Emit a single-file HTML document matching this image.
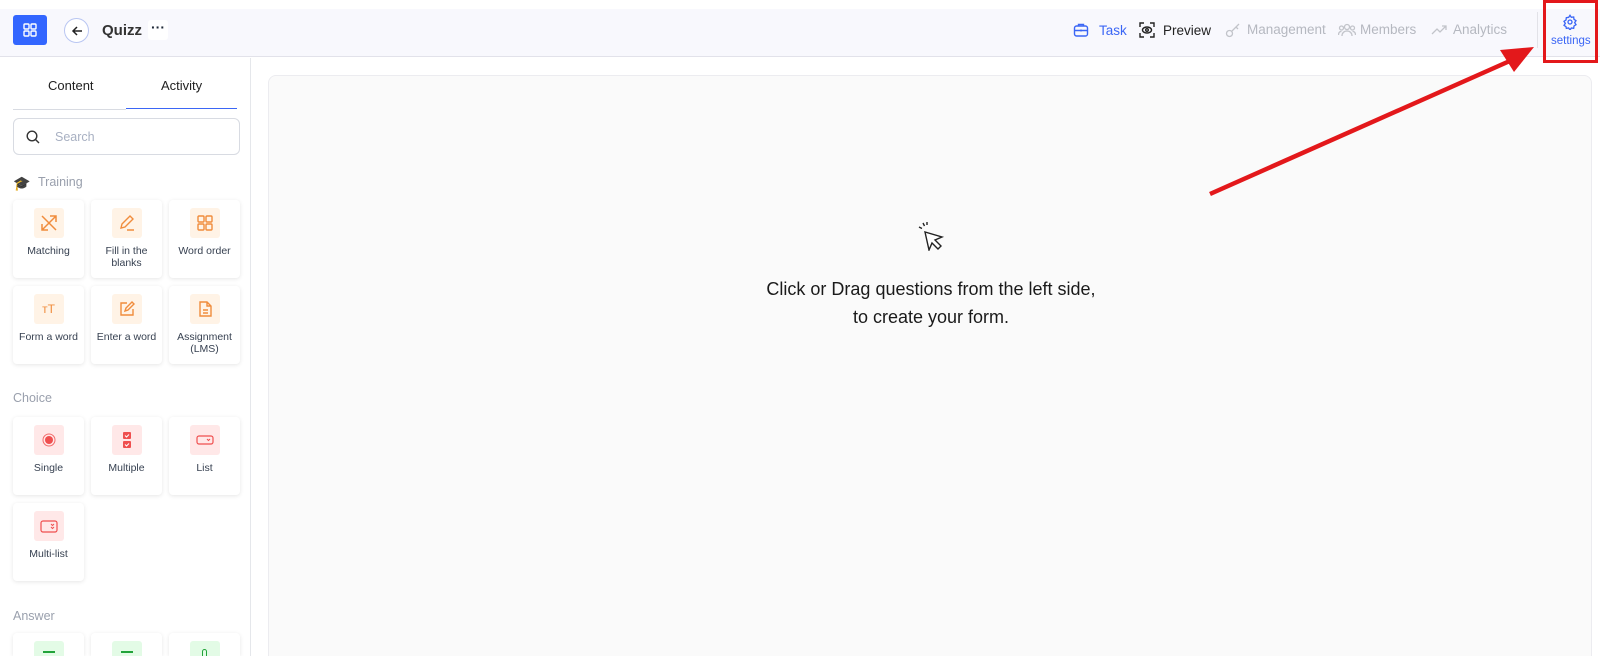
<!DOCTYPE html>
<html><head><meta charset="utf-8"><style>
*{box-sizing:border-box;margin:0;padding:0}
html,body{width:1600px;height:656px;overflow:hidden}
body{background:#fff;font-family:"Liberation Sans",sans-serif;color:#1f2937}
#w{position:relative;width:1600px;height:656px;overflow:hidden}
.a{position:absolute}
.hdr{left:0;top:9px;width:1600px;height:48px;background:#f8f8fd;border-bottom:1px solid #e2e2ea}
.nav{top:22px;font-size:13.5px;color:#b5b8c0;display:flex;align-items:center;gap:6px}
.card{position:absolute;width:71px;height:78px;background:#fff;border-radius:4px;box-shadow:0 1px 4px rgba(0,0,0,.1);text-align:center;font-size:10.5px;color:#374151;overflow:hidden}
.ic{width:30px;height:30px;border-radius:3px;margin:8px auto 7px;display:flex;align-items:center;justify-content:center}
.o{background:#fff3e6}.r{background:#ffe8e8}.g{background:#e3fbe6}
.lbl{font-size:12.5px;color:#9aa0ad}
</style></head><body><div id="w">
<div class="a hdr"></div>
<div class="a" style="left:13px;top:15px;width:34px;height:30px;background:#3366ff;border-radius:3px;display:flex;align-items:center;justify-content:center">
<svg width="14" height="14" viewBox="0 0 14 14" fill="none" stroke="#fff" stroke-width="1.4"><rect x="1" y="1" width="5" height="5" rx="1"/><rect x="8" y="1" width="5" height="5" rx="1"/><rect x="1" y="8" width="5" height="5" rx="1"/><rect x="8" y="8" width="5" height="5" rx="1"/></svg></div>
<div class="a" style="left:64px;top:18px;width:25px;height:25px;border-radius:50%;border:1px solid #b9c6f2;background:#fff;display:flex;align-items:center;justify-content:center">
<svg width="12" height="12" viewBox="0 0 12 12" fill="none" stroke="#222" stroke-width="1.5"><path d="M11 6H2M6 2L2 6l4 4"/></svg></div>
<div class="a" style="left:102px;top:22px;font-size:15px;font-weight:bold;color:#333">Quizz</div>
<div class="a" style="left:148px;top:20px;width:20px;height:20px;background:#fff;border-radius:3px;font-size:14px;text-align:center;line-height:14px;font-weight:bold">···</div>

<div class="a nav" style="left:1073px;color:#3b66f5"><svg width="16" height="16" viewBox="0 0 16 16" fill="none" stroke="#3b66f5" stroke-width="1.4"><rect x="1.5" y="4" width="13" height="10" rx="2"/><path d="M5.5 4V2.5h5V4M1.5 8.5h13M8 7.5v2"/></svg><span style="margin-left:4px">Task</span></div>
<div class="a nav" style="left:1139px;color:#222"><svg width="16" height="16" viewBox="0 0 16 16" fill="none" stroke="#222" stroke-width="1.4"><path d="M1 5V1h4M11 1h4v4M15 11v4h-4M5 15H1v-4"/><ellipse cx="8" cy="8" rx="4.5" ry="3"/><circle cx="8" cy="8" r="1.3"/></svg><span style="margin-left:2px">Preview</span></div>
<div class="a nav" style="left:1225px"><svg width="16" height="16" viewBox="0 0 16 16" fill="none" stroke="#c2c4ca" stroke-width="1.3"><circle cx="4.5" cy="11.5" r="3"/><path d="M7 9l7-7M11 5l2 2"/></svg></div>
<div class="a nav" style="left:1247px">Management</div>
<div class="a nav" style="left:1338px"><svg width="18" height="16" viewBox="0 0 18 16" fill="none" stroke="#c2c4ca" stroke-width="1.3"><circle cx="9" cy="5" r="2.5"/><circle cx="3.5" cy="6" r="2"/><circle cx="14.5" cy="6" r="2"/><path d="M4 14c0-3 2-5 5-5s5 2 5 5M0.5 13c0-2 1-3.5 3-3.5M17.5 13c0-2-1-3.5-3-3.5"/></svg></div>
<div class="a nav" style="left:1360px">Members</div>
<div class="a nav" style="left:1431px"><svg width="16" height="16" viewBox="0 0 16 16" fill="none" stroke="#c2c4ca" stroke-width="1.3"><path d="M1 12l5-5 3 3 6-6M11 4h4v4"/></svg></div>
<div class="a nav" style="left:1453px">Analytics</div>
<div class="a" style="left:1537px;top:12px;width:1px;height:36px;background:#e2e2e8"></div>
<div class="a" style="left:1562px;top:14px"><svg width="16" height="16" viewBox="0 0 24 24" fill="none" stroke="#3b66f5" stroke-width="2"><circle cx="12" cy="12" r="3"/><path d="M12 2l2 3 3.5-.5.5 3.5 3 2-2 3 2 3-3 2-.5 3.5-3.5-.5-2 3-2-3-3.5.5L6 19l-3-2 2-3-2-3 3-2 .5-3.5L10 5z"/></svg></div>
<div class="a" style="left:1551px;top:35px;font-size:11.5px;color:#3b66f5">settings</div>
<div class="a" style="left:1543px;top:0;width:55px;height:63px;border:3px solid #e3181b"></div>

<div class="a" style="left:250px;top:58px;width:1px;height:598px;background:#e5e7eb"></div>
<div class="a" style="left:48px;top:78px;font-size:13px;color:#222">Content</div>
<div class="a" style="left:161px;top:78px;font-size:13px;color:#222">Activity</div>
<div class="a" style="left:13px;top:109px;width:113px;height:1px;background:#d8dbe2"></div>
<div class="a" style="left:126px;top:108px;width:111px;height:1px;background:#3b66f5"></div>
<div class="a" style="left:13px;top:118px;width:227px;height:37px;border:1px solid #d8dbe2;border-radius:6px"></div>
<div class="a" style="left:26px;top:130px"><svg width="14" height="14" viewBox="0 0 14 14" fill="none" stroke="#333" stroke-width="1.4"><circle cx="6" cy="6" r="4.8"/><path d="M9.5 9.5L13 13"/></svg></div>
<div class="a" style="left:55px;top:130px;font-size:12.5px;color:#a8b0c2">Search</div>
<div class="a" style="left:13px;top:175px;font-size:14px">🎓</div>
<div class="a lbl" style="left:38px;top:175px">Training</div>

<div class="card" style="left:13px;top:200px"><div class="ic o"><svg width="18" height="18" viewBox="0 0 18 18" fill="none" stroke="#f08c3c" stroke-width="1.5"><path d="M2 16L16 2M2 2l14 14M2 10v6h6M16 8V2h-6"/></svg></div>Matching</div>
<div class="card" style="left:91px;top:200px"><div class="ic o"><svg width="18" height="18" viewBox="0 0 18 18" fill="none" stroke="#f08c3c" stroke-width="1.4"><path d="M3 14l1-4 8-8 3 3-8 8zM9 16h7"/></svg></div>Fill in the<br>blanks</div>
<div class="card" style="left:169px;top:200px"><div class="ic o"><svg width="18" height="18" viewBox="0 0 18 18" fill="none" stroke="#f08c3c" stroke-width="1.4"><rect x="2" y="2" width="6" height="6" rx="1"/><rect x="10" y="2" width="6" height="6" rx="1"/><rect x="2" y="10" width="6" height="6" rx="1"/><rect x="10" y="10" width="6" height="6" rx="1"/></svg></div>Word order</div>
<div class="card" style="left:13px;top:286px"><div class="ic o" style="color:#f08c3c;font-size:12px">тT</div>Form a word</div>
<div class="card" style="left:91px;top:286px"><div class="ic o"><svg width="18" height="18" viewBox="0 0 18 18" fill="none" stroke="#f08c3c" stroke-width="1.4"><path d="M9 3H3v12h12V9M7 11l1-3 6-6 2 2-6 6z"/></svg></div>Enter a word</div>
<div class="card" style="left:169px;top:286px"><div class="ic o"><svg width="18" height="18" viewBox="0 0 18 18" fill="none" stroke="#f08c3c" stroke-width="1.4"><path d="M4 2h7l4 4v10H4zM11 2v4h4M7 10h5M7 13h5"/></svg></div>Assignment<br>(LMS)</div>

<div class="a lbl" style="left:13px;top:391px">Choice</div>
<div class="card" style="left:13px;top:417px"><div class="ic r"><svg width="14" height="14"><circle cx="7" cy="7" r="6" fill="none" stroke="#f26b6b"/><circle cx="7" cy="7" r="4" fill="#ef4f4f"/></svg></div>Single</div>
<div class="card" style="left:91px;top:417px"><div class="ic r"><svg width="10" height="18"><rect x="1" y="1" width="8" height="7" rx="1" fill="#ef4f4f"/><rect x="1" y="10" width="8" height="7" rx="1" fill="#ef4f4f"/><path d="M3 4.5l1.5 1.5L7 3.5M3 13.5l1.5 1.5L7 12.5" stroke="#fff" fill="none"/></svg></div>Multiple</div>
<div class="card" style="left:169px;top:417px"><div class="ic r"><svg width="18" height="10"><rect x="1" y="1" width="16" height="8" rx="2" fill="none" stroke="#ef4f4f" stroke-width="1.2"/><path d="M11 4l1.5 1.5L14 4" stroke="#ef4f4f" fill="none"/></svg></div>List</div>
<div class="card" style="left:13px;top:503px"><div class="ic r"><svg width="18" height="13"><rect x="1" y="1" width="16" height="11" rx="2" fill="none" stroke="#ef4f4f" stroke-width="1.2"/><path d="M11 4l1.5 1.5L14 4M11 7l1.5 1.5L14 7" stroke="#ef4f4f" fill="none"/></svg></div>Multi-list</div>

<div class="a lbl" style="left:13px;top:609px">Answer</div>
<div class="card" style="left:13px;top:633px;height:23px;border-radius:4px 4px 0 0"><div class="ic g" style="align-items:flex-start;padding-top:10px"><div style="width:12px;height:2px;background:#22a33a"></div></div></div>
<div class="card" style="left:91px;top:633px;height:23px;border-radius:4px 4px 0 0"><div class="ic g" style="align-items:flex-start;padding-top:10px"><div style="width:12px;height:2px;background:#22a33a"></div></div></div>
<div class="card" style="left:169px;top:633px;height:23px;border-radius:4px 4px 0 0"><div class="ic g" style="align-items:flex-start;padding-top:8px"><div style="width:5px;height:12px;border:1.4px solid #22a33a;border-radius:3px"></div></div></div>

<div class="a" style="left:268px;top:75px;width:1324px;height:581px;background:#fafafa;border:1px solid #ececf0;border-bottom:none;border-radius:8px 8px 0 0"></div>
<div class="a" style="left:916px;top:219px"><svg width="30" height="32" viewBox="0 0 30 32" fill="none" stroke="#222" stroke-width="1.4"><path d="M9 13l4 18 3-7 6 6 3-3-6-6 7-3z" fill="#fff"/><path d="M7 4l1.5 3M11 3v3M3 8l3 1.5"/></svg></div>
<div class="a" style="left:531px;top:275px;width:800px;text-align:center;font-size:18px;line-height:28px;color:#1a1a1a">Click or Drag questions from the left side,<br>to create your form.</div>

<svg class="a" style="left:0;top:0" width="1600" height="656"><path d="M1210 194L1512 60" stroke="#e3181b" stroke-width="4.5"/><path d="M1534 47L1500 50 1514 72z" fill="#e3181b"/></svg>
</div></body></html>
